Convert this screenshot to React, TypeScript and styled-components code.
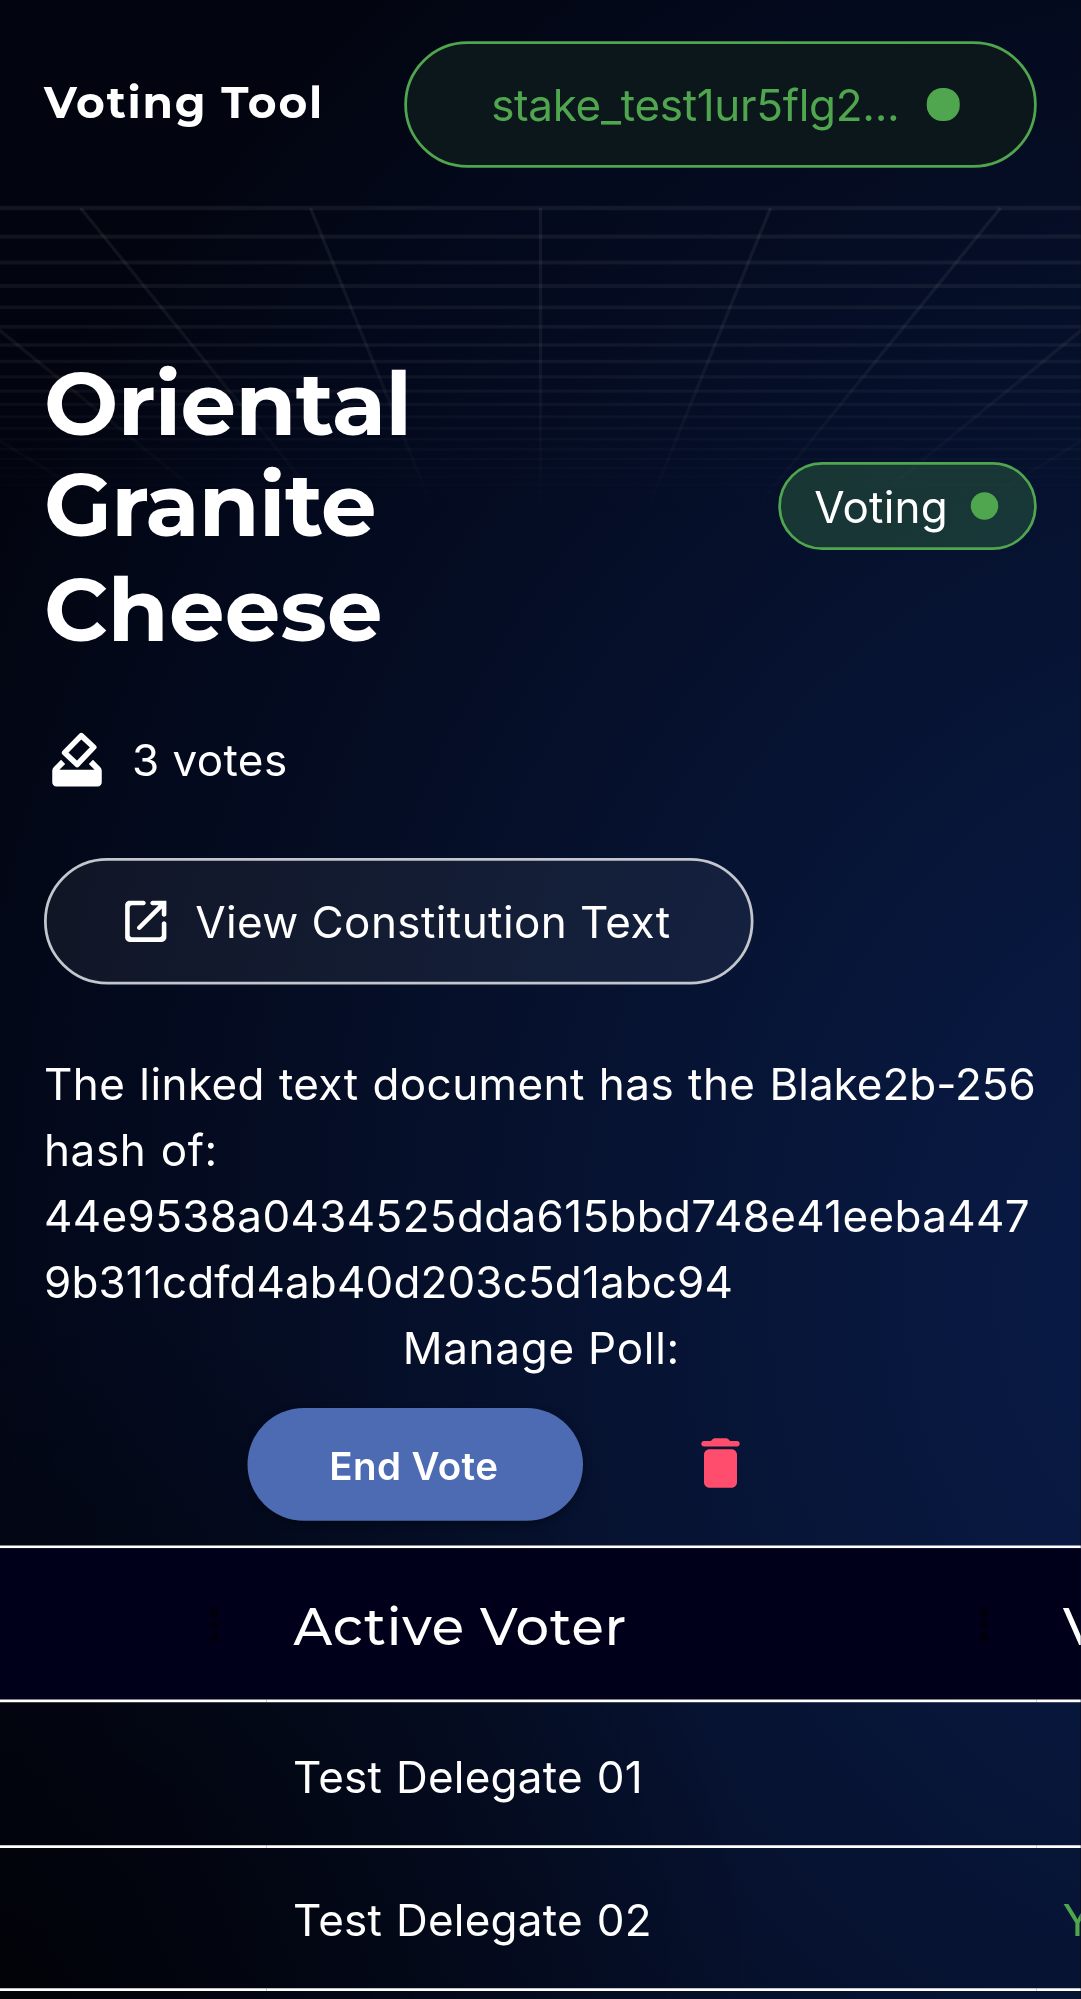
import React from "react";
import styled, { createGlobalStyle } from "styled-components";

const SCALE = 2.75;

const GlobalStyle = createGlobalStyle`
  * { box-sizing: border-box; }
  html { background: #02050e; }
  body {
    margin: 0;
    overflow: hidden;
    color: #fff;
    font: 400 16px/24px Inter, "Liberation Sans", sans-serif;
    letter-spacing: 0.15px;
  }
`;

const Screen = styled.div`
  width: 1081px;
  height: 1999px;
  overflow: hidden;
`;

const Page = styled.div`
  position: relative;
  width: 393.1px;
  height: 727px;
  overflow: hidden;
  transform: scale(${SCALE});
  transform-origin: 0 0;
  background:
    radial-gradient(ellipse 280px 260px at 0 727px, rgba(1, 2, 6, 0.8), rgba(1, 2, 6, 0)),
    radial-gradient(ellipse 520px 610px at 456px 470px, #091b4a 0%, #08183f 22%, #061230 48%, #050d24 68%, #03081a 86%, #02050f 100%);
`;

const Grid = styled.svg`
  position: absolute;
  top: 0;
  left: 0;
  width: 393.1px;
  height: 196.4px;
`;

const Spaced = styled.span<{ $letter: number; $word?: number }>`
  letter-spacing: ${(p) => p.$letter}px;
  word-spacing: ${(p) => p.$word ?? 0}px;
`;

const Header = styled.header`
  position: relative;
  display: flex;
  align-items: center;
  justify-content: space-between;
  height: 76px;
  padding: 0 16px;
`;

const Brand = styled.div`
  font-family: Montserrat, Inter, sans-serif;
  font-weight: 700;
  letter-spacing: 0.62px;
  padding-bottom: 1px;
`;

const Pill = styled.div`
  display: flex;
  align-items: center;
  justify-content: space-between;
  flex: none;
  border: 1px solid #4fa64f;
`;

const WalletPill = styled(Pill)`
  width: 230px;
  height: 46px;
  padding: 0 27.4px 0 30.5px;
  border-radius: 23px;
  background: #0c171b;
  color: #4fa64f;
`;

const StatusPill = styled(Pill)`
  width: 94px;
  height: 32px;
  padding: 0 13px 0 12px;
  border-radius: 16px;
  background: rgba(79, 166, 79, 0.25);
`;

const Dot = styled.span<{ $size: number }>`
  flex: none;
  width: ${(p) => p.$size}px;
  height: ${(p) => p.$size}px;
  border-radius: 50%;
  background: #4fa64f;
`;

const Main = styled.main`
  position: relative;
  padding: 0 16px;
`;

const TitleRow = styled.div`
  display: flex;
  align-items: center;
  justify-content: space-between;
  padding-top: 52px;
`;

const Title = styled.h1`
  margin: 0;
  width: 160px;
  font: 700 32px/37.33px Montserrat, Inter, sans-serif;
  letter-spacing: 0;
`;

const Votes = styled.div`
  display: flex;
  align-items: center;
  gap: 8px;
  margin-top: 24px;
  height: 24px;
`;

const ViewButton = styled.button`
  display: flex;
  align-items: center;
  width: 258px;
  height: 46px;
  margin: 24px 0 0;
  padding: 0 0 0 26px;
  gap: 8px;
  border: 1px solid #c3c6cd;
  border-radius: 23px;
  background: rgba(255, 255, 255, 0.06);
  color: #fff;
  font: inherit;
  letter-spacing: inherit;
`;

const Paragraph = styled.p`
  margin: 24px -3px 0 0;
  overflow-wrap: break-word;
`;

const Manage = styled.div`
  text-align: center;
  letter-spacing: 0.27px;
  padding-left: 0.6px;
`;

const Actions = styled.div`
  display: flex;
  align-items: center;
  height: 41px;
  margin-top: 10px;
  padding-left: 74px;
  gap: 38px;
`;

const EndButton = styled.button`
  width: 122px;
  height: 41px;
  padding: 1px 1px 0 0;
  border: 0;
  border-radius: 20.5px;
  background: #4d6bb3;
  color: #fff;
  font: 600 14px/24.5px Inter, sans-serif;
  letter-spacing: 0.15px;
  box-shadow: 0 1px 3px rgba(0, 0, 0, 0.4);
`;

const Table = styled.div`
  position: relative;
  width: 510px;
  margin-top: 9px;
  border-top: 1px solid #fff;
`;

const Row = styled.div<{ $h: number; $head?: boolean }>`
  display: grid;
  grid-template-columns: 96.95px 279.85px 133px;
  height: ${(p) => p.$h}px;
  background: ${(p) => (p.$head ? "#00001a" : "transparent")};
`;

const Cell = styled.div<{ $green?: boolean }>`
  display: flex;
  align-items: center;
  padding: 2px 10px 0 9.6px;
  border-bottom: 1px solid #fff;
  color: ${(p) => (p.$green ? "#4fa64f" : "#fff")};
  letter-spacing: 0.09px;
  word-spacing: 0.4px;
`;

const HeadCell = styled(Cell)`
  justify-content: space-between;
  padding-top: 1px;
  padding-left: 9.8px;
  font: 500 19.2px/24px Montserrat, Inter, sans-serif;
  letter-spacing: 0.3px;
  word-spacing: 0;
`;

const Glyph = styled.svg<{ $size: number }>`
  flex: none;
  width: ${(p) => p.$size}px;
  height: ${(p) => p.$size}px;
`;

const VoteIcon = () => (
  <Glyph $size={24} viewBox="0 -0.5 24 24">
    <path
      d="M13.55 3L7.5 9.2L12.05 13.5L18.1 7.2z"
      fill="none"
      stroke="#fff"
      strokeWidth="2"
      strokeLinejoin="round"
    />
    <path
      fill="#fff"
      d="M6.2 11.8L7.7 13.3L5.6 15.45H18.4L16.3 13.3L17.8 11.8L20.4 14.4Q21 15 21 15.8V20a1.5 1.5 0 0 1-1.5 1.5h-15A1.5 1.5 0 0 1 3 20V15.8Q3 15 3.6 14.4z"
    />
  </Glyph>
);

const Icon = ({ size, d, fill = "#fff" }: { size: number; d: string; fill?: string }) => (
  <Glyph $size={size} viewBox="0 0 24 24" fill={fill}>
    <path d={d} />
  </Glyph>
);

const LAUNCH =
  "M18 19H6c-.55 0-1-.45-1-1V6c0-.55.45-1 1-1h5c.55 0 1-.45 1-1s-.45-1-1-1H5c-1.11 0-2 .9-2 2v14c0 1.1.9 2 2 2h14c1.1 0 2-.9 2-2v-6c0-.55-.45-1-1-1s-1 .45-1 1v5c0 .55-.45 1-1 1zM14 4c0 .55.45 1 1 1h2.59l-9.13 9.13c-.39.39-.39 1.02 0 1.41.39.39 1.02.39 1.41 0L19 6.41V9c0 .55.45 1 1 1s1-.45 1-1V3h-6c-.55 0-1 .45-1 1z";
const TRASH =
  "M6 19c0 1.1.9 2 2 2h8c1.1 0 2-.9 2-2V9c0-1.1-.9-2-2-2H8c-1.1 0-2 .9-2 2v10zM18 4h-2.5l-.71-.71c-.18-.18-.44-.29-.7-.29H9.91c-.26 0-.52.11-.7.29L8.5 4H6c-.55 0-1 .45-1 1s.45 1 1 1h12c.55 0 1-.45 1-1s-.45-1-1-1z";
const MORE =
  "M12 8c1.1 0 2-.9 2-2s-.9-2-2-2-2 .9-2 2 .9 2 2 2zm0 2c-1.1 0-2 .9-2 2s.9 2 2 2 2-.9 2-2-.9-2-2-2zm0 6c-1.1 0-2 .9-2 2s.9 2 2 2 2-.9 2-2-.9-2-2-2z";

const HORIZON = 773;
const lines = Array.from({ length: 24 }, (_, n) => HORIZON - 1 / (0.00177 + 0.0000943 * n));
const rays = Array.from({ length: 15 }, (_, n) => n - 7);

const Backdrop = () => (
  <Grid viewBox="0 0 1081 540">
    <defs>
      <linearGradient id="fade" gradientUnits="userSpaceOnUse" x1="0" y1="200" x2="0" y2="515">
        <stop offset="0" stopColor="#fff" />
        <stop offset="0.5" stopColor="#fff" stopOpacity="0.8" />
        <stop offset="1" stopColor="#fff" stopOpacity="0" />
      </linearGradient>
      <mask id="gridMask" maskUnits="userSpaceOnUse" x="0" y="200" width="1081" height="340">
        <rect x="0" y="200" width="1081" height="340" fill="url(#fade)" />
      </mask>
    </defs>
    <g mask="url(#gridMask)" stroke="#9b9b9b" strokeOpacity="0.11" fill="none">
      {lines.map((y) => (
        <path key={y} d={`M0 ${y}H1081`} strokeWidth={(4.6 * (HORIZON - y)) / 565} />
      ))}
      {rays.map((k) => (
        <path
          key={k}
          strokeWidth={3.4}
          d={`M${540.5 + 230 * k} 208L${540.5 + 230 * k * ((HORIZON - 530) / 565)} 530`}
        />
      ))}
    </g>
  </Grid>
);

export default function App() {
  return (
    <Screen>
      <GlobalStyle />
      <Page>
        <Backdrop />
        <Header>
          <Brand>Voting Tool</Brand>
          <WalletPill>
            <Spaced $letter={-0.11}>stake_test1ur5flg2...</Spaced>
            <Dot $size={11.3} />
          </WalletPill>
        </Header>
        <Main>
          <TitleRow>
            <Title>
              <Spaced $letter={-0.22}>Oriental Granite</Spaced> <Spaced $letter={0.03}>Cheese</Spaced>
            </Title>
            <StatusPill>
              <Spaced $letter={0.06}>Voting</Spaced>
              <Dot $size={10} />
            </StatusPill>
          </TitleRow>
          <Votes>
            <VoteIcon />
            <span>3 votes</span>
          </Votes>
          <ViewButton>
            <Icon size={20} d={LAUNCH} />
            <span>View Constitution Text</span>
          </ViewButton>
          <Paragraph>
            <Spaced $letter={0.15} $word={0.45}>The linked text document has the </Spaced>
            <Spaced $letter={0}>Blake2b-256</Spaced>
            <br />
            <Spaced $letter={0.22} $word={0.5}>hash of:</Spaced>
            <br />
            <Spaced $letter={0.125}>44e9538a0434525dda615bbd748e41eeba447</Spaced>
            <Spaced $letter={0.05}>9b311cdfd4ab40d203c5d1abc94</Spaced>
          </Paragraph>
          <Manage>Manage Poll:</Manage>
          <Actions>
            <EndButton>End Vote</EndButton>
            <Icon size={24} d={TRASH} fill="#ff4d6d" />
          </Actions>
        </Main>
        <Table>
          <Row $h={56} $head>
            <HeadCell>
              <span />
              <Icon size={18} d={MORE} fill="#000008" />
            </HeadCell>
            <HeadCell>
              Active Voter
              <Icon size={18} d={MORE} fill="#000008" />
            </HeadCell>
            <HeadCell>Vote</HeadCell>
          </Row>
          <Row $h={53}>
            <Cell />
            <Cell>Test Delegate 01</Cell>
            <Cell />
          </Row>
          <Row $h={52}>
            <Cell />
            <Cell>Test Delegate 02</Cell>
            <Cell $green>Yes</Cell>
          </Row>
        </Table>
      </Page>
    </Screen>
  );
}
